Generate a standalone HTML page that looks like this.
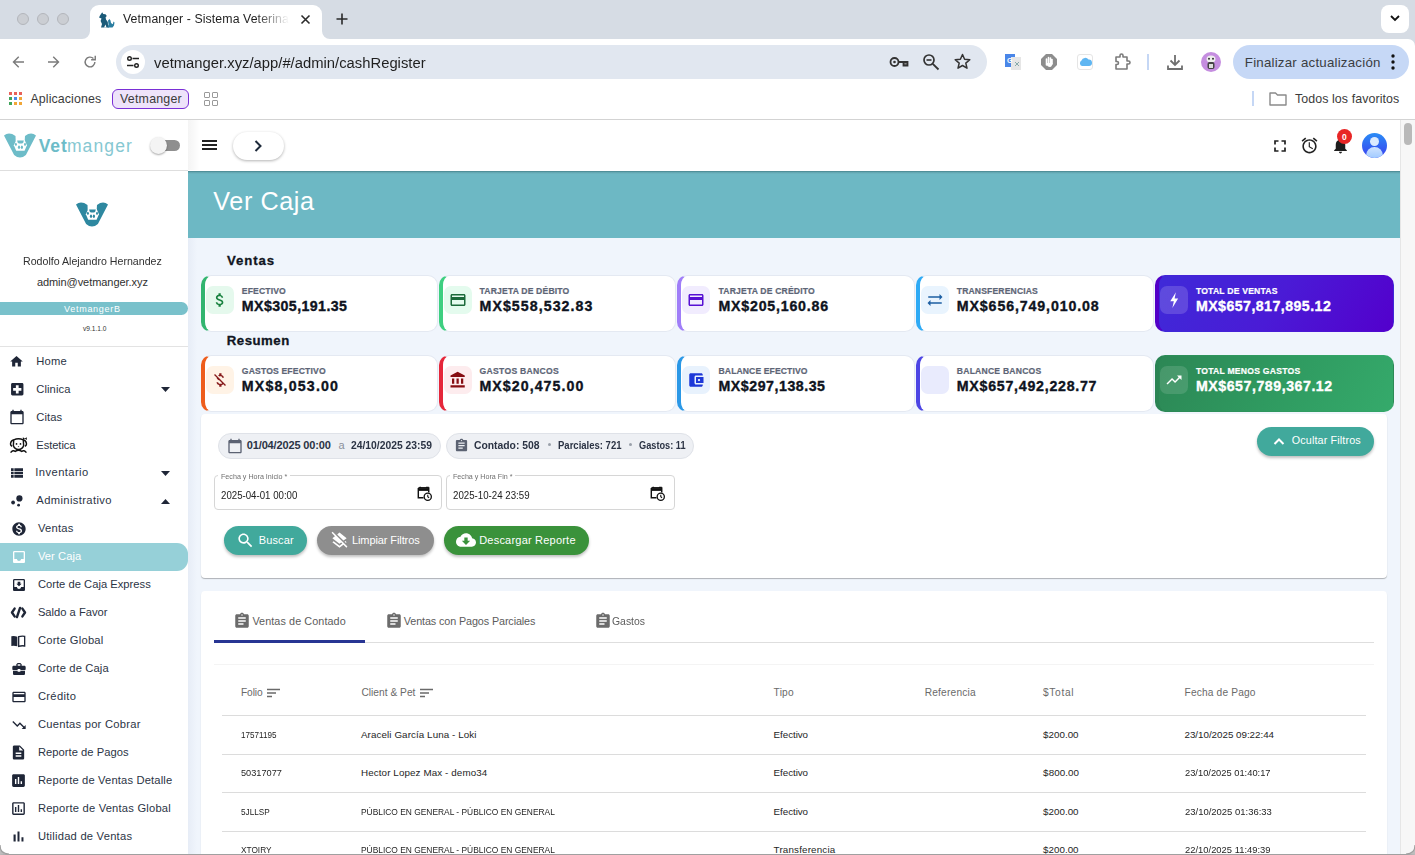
<!DOCTYPE html>
<html><head><meta charset="utf-8"><title>Vetmanger - Ver Caja</title>
<style>
html,body{margin:0;padding:0;width:1415px;height:855px;overflow:hidden;background:#fff;font-family:'Liberation Sans', sans-serif;}
span{line-height:1;white-space:nowrap;}
svg{display:block;overflow:visible}
</style></head><body>
<div style="position:absolute;left:0px;top:0px;width:1415px;height:39px;background:#d6dce4"></div>
<div style="position:absolute;left:17px;top:13px;width:12px;height:12px;border-radius:50%;background:#cbced3;box-sizing:border-box;border:1px solid #b3b6bb"></div>
<div style="position:absolute;left:37px;top:13px;width:12px;height:12px;border-radius:50%;background:#cbced3;box-sizing:border-box;border:1px solid #b3b6bb"></div>
<div style="position:absolute;left:57px;top:13px;width:12px;height:12px;border-radius:50%;background:#cbced3;box-sizing:border-box;border:1px solid #b3b6bb"></div>
<div style="position:absolute;left:90px;top:5px;width:232px;height:34px;background:#fff;border-radius:9px 9px 0 0"></div>
<svg style="position:absolute;left:82px;top:31px" width="8" height="8"><path d="M0 8 A8 8 0 0 0 8 0 L8 8 Z" fill="#fff"/></svg>
<svg style="position:absolute;left:322px;top:31px" width="8" height="8"><path d="M8 8 A8 8 0 0 1 0 0 L0 8 Z" fill="#fff"/></svg>
<svg style="position:absolute;left:98px;top:11px;" width="17" height="17" viewBox="0 0 17 17"><path d="M2 4.5 L4.2 1.2 L5.2 3 L7.5 3.2 L8.8 5 L7.6 6.2 L8 8.5 L9.8 11 L10 14 L11 16.5 L3 16.5 L4 13 L2.6 10 L3.5 7.5 L1 6.5 Z" fill="#1b5a78"/><path d="M10 9.5 L11.5 8 L12.5 9.5 L13 12 L14.8 13.2 L15.5 10.5 L16.5 11.5 L16 14.5 L14.5 16.5 L9.5 16.5 L10.5 13.5 Z" fill="#2a7da0"/><path d="M6 16.5 L7.5 13.5 L8.5 16.5 Z" fill="#fff"/></svg>
<svg style="position:absolute;left:300px;top:14px;" width="11" height="11" viewBox="0 0 11 11"><path d="M1.5 1.5 L9.5 9.5 M9.5 1.5 L1.5 9.5" stroke="#2a2a2a" stroke-width="1.6"/></svg>
<svg style="position:absolute;left:336px;top:13px;" width="12" height="12" viewBox="0 0 12 12"><path d="M6 0.5 V11.5 M0.5 6 H11.5" stroke="#2a2a2a" stroke-width="1.6"/></svg>
<div style="position:absolute;left:1381px;top:5px;width:28px;height:28px;background:#fff;border-radius:8px"></div>
<svg style="position:absolute;left:1390px;top:15px;" width="10" height="7" viewBox="0 0 10 7"><path d="M1 1 L5 5 L9 1" stroke="#111" stroke-width="1.8" fill="none"/></svg>
<div style="position:absolute;left:0px;top:39px;width:1415px;height:80px;background:#fff"></div>
<div style="position:absolute;left:0px;top:119px;width:1415px;height:1px;background:#d3d3d3"></div>
<svg style="position:absolute;left:1408px;top:39px" width="7" height="7" viewBox="0 0 7 7"><path d="M0 0 H7 V7 A7 7 0 0 0 0 0 Z" fill="#d6dce4"/></svg>
<svg style="position:absolute;left:9px;top:53px;" width="18" height="18" viewBox="0 0 24 24"><path d="M13 5 L6 12 L13 19 M6 12 H20" stroke="#7b7b7b" stroke-width="1.9" fill="none"/></svg>
<svg style="position:absolute;left:45px;top:53px;" width="18" height="18" viewBox="0 0 24 24"><path d="M11 5 L18 12 L11 19 M18 12 H4" stroke="#7b7b7b" stroke-width="1.9" fill="none"/></svg>
<svg style="position:absolute;left:81px;top:53px;" width="18" height="18" viewBox="0 0 24 24"><path d="M18.5 12 A6.5 6.5 0 1 1 16.6 7.4" stroke="#7b7b7b" stroke-width="1.9" fill="none"/><path d="M19 3.5 V9 H13.5" stroke="#7b7b7b" stroke-width="1.9" fill="none"/></svg>
<div style="position:absolute;left:116px;top:45px;width:871px;height:34px;background:#e1e7f0;border-radius:17px"></div>
<div style="position:absolute;left:121px;top:50px;width:24px;height:24px;background:#fff;border-radius:50%"></div>
<svg style="position:absolute;left:125px;top:54px;" width="16" height="16" viewBox="0 0 16 16"><circle cx="4.5" cy="4.5" r="1.8" stroke="#222" stroke-width="1.4" fill="none"/><path d="M7.5 4.5 H14" stroke="#222" stroke-width="1.5"/><path d="M2 11.5 H8.5" stroke="#222" stroke-width="1.5"/><circle cx="11.5" cy="11.5" r="1.8" stroke="#222" stroke-width="1.4" fill="none"/></svg>
<svg style="position:absolute;left:889px;top:53px;" width="20" height="18" viewBox="0 0 20 18"><circle cx="5.5" cy="9" r="4" stroke="#333" stroke-width="1.8" fill="none"/><circle cx="5.5" cy="9" r="1.3" fill="#333"/><path d="M9.5 9 H18.5 V12.5 H14.5 V9" stroke="#333" stroke-width="1.8" fill="#888"/></svg>
<svg style="position:absolute;left:922px;top:53px;" width="18" height="18" viewBox="0 0 18 18"><circle cx="7" cy="7" r="5" stroke="#333" stroke-width="1.7" fill="none"/><path d="M4.5 7 H9.5" stroke="#333" stroke-width="1.6"/><path d="M10.8 10.8 L16.5 16.5" stroke="#333" stroke-width="1.8"/></svg>
<svg style="position:absolute;left:954px;top:53px;" width="17" height="17" viewBox="0 0 17 17"><path d="M8.5 1.5 L10.6 6.3 L15.8 6.7 L11.8 10.1 L13 15.2 L8.5 12.5 L4 15.2 L5.2 10.1 L1.2 6.7 L6.4 6.3 Z" stroke="#333" stroke-width="1.5" fill="none" stroke-linejoin="round"/></svg>
<svg style="position:absolute;left:1005px;top:54px;" width="17" height="16" viewBox="0 0 17 16"><rect x="0" y="0" width="10" height="13" fill="#4a86e8"/><rect x="6" y="3" width="10" height="13" fill="#e6e6e6"/><text x="2" y="9" font-size="7" fill="#fff" font-family="Liberation Sans" font-weight="bold">G</text><path d="M10 8 L14 12 M14 8 L10 12" stroke="#8aa" stroke-width="1"/></svg>
<svg style="position:absolute;left:1041px;top:54px;" width="16" height="16" viewBox="0 0 16 16"><path d="M5 0 H11 L16 5 V11 L11 16 H5 L0 11 V5 Z" fill="#8d8d8d"/><path d="M5.5 11 V5 M7.5 10 V3.5 M9.5 10 V4 M11 10 V5.5" stroke="#fff" stroke-width="1.6" stroke-linecap="round"/><path d="M5 9 Q6 13 9 13 Q11 13 11.5 9" fill="#fff"/></svg>
<div style="position:absolute;left:1077px;top:54px;width:16px;height:16px;background:#fff;border:1px solid #e5e5e5;border-radius:3px;box-sizing:border-box"></div>
<svg style="position:absolute;left:1079px;top:57px;" width="12" height="9" viewBox="0 0 12 9"><path d="M3 9 A3 3 0 0 1 2.5 3.5 A4 4 0 0 1 9.5 2.5 A3 3 0 0 1 10 9 Z" fill="#5fb6f2"/></svg>
<svg style="position:absolute;left:1113px;top:53px;" width="18" height="18" viewBox="0 0 18 18"><path d="M3 4 H7 V2.5 A1.5 1.5 0 0 1 10 2.5 V4 H14 V8 H15.5 A1.5 1.5 0 0 1 15.5 11 H14 V16 H3 V11.5 H4 A1.5 1.5 0 0 0 4 8.5 H3 Z" stroke="#7b7b7b" stroke-width="1.6" fill="none" stroke-linejoin="round"/></svg>
<div style="position:absolute;left:1147px;top:54px;width:2px;height:16px;background:#c5d7f5"></div>
<svg style="position:absolute;left:1166px;top:53px;" width="18" height="18" viewBox="0 0 18 18"><path d="M9 2 V12 M4.5 7.5 L9 12 L13.5 7.5" stroke="#6f6f6f" stroke-width="1.8" fill="none"/><path d="M2 12.5 V16 H16 V12.5" stroke="#6f6f6f" stroke-width="1.8" fill="none"/></svg>
<div style="position:absolute;left:1201px;top:52px;width:20px;height:20px;background:#c58ee0;border-radius:50%"></div>
<svg style="position:absolute;left:1204px;top:54px;" width="14" height="16" viewBox="0 0 14 16"><ellipse cx="7" cy="5" rx="4.5" ry="3.5" fill="#eee"/><circle cx="5" cy="4.8" r="1" fill="#333"/><circle cx="9" cy="4.8" r="1" fill="#333"/><rect x="3.5" y="8" width="7" height="7" rx="2" fill="#444"/><rect x="5" y="10" width="4" height="4" fill="#ddd"/></svg>
<div style="position:absolute;left:1233px;top:45px;width:176px;height:34px;background:#c6d8f6;border-radius:17px"></div>
<svg style="position:absolute;left:1390px;top:53px;" width="6" height="18" viewBox="0 0 6 18"><circle cx="3" cy="3" r="1.7" fill="#111"/><circle cx="3" cy="9" r="1.7" fill="#111"/><circle cx="3" cy="15" r="1.7" fill="#111"/></svg>
<div style="position:absolute;left:9px;top:92px;width:3px;height:3px;background:#e8625a"></div>
<div style="position:absolute;left:14px;top:92px;width:3px;height:3px;background:#e8625a"></div>
<div style="position:absolute;left:19px;top:92px;width:3px;height:3px;background:#e8625a"></div>
<div style="position:absolute;left:9px;top:97px;width:3px;height:3px;background:#3fa45b"></div>
<div style="position:absolute;left:14px;top:97px;width:3px;height:3px;background:#4a8bea"></div>
<div style="position:absolute;left:19px;top:97px;width:3px;height:3px;background:#f1a637"></div>
<div style="position:absolute;left:9px;top:102px;width:3px;height:3px;background:#3fa45b"></div>
<div style="position:absolute;left:14px;top:102px;width:3px;height:3px;background:#f1a637"></div>
<div style="position:absolute;left:19px;top:102px;width:3px;height:3px;background:#f1a637"></div>
<div style="position:absolute;left:112px;top:89px;width:77px;height:20px;background:#eee3fa;border:1.5px solid #7a2fd6;border-radius:6px;box-sizing:border-box"></div>
<div style="position:absolute;left:204px;top:92px;width:6px;height:6px;border:1.3px solid #9a9a9a;box-sizing:border-box;border-radius:1px"></div>
<div style="position:absolute;left:212px;top:92px;width:6px;height:6px;border:1.3px solid #9a9a9a;box-sizing:border-box;border-radius:1px"></div>
<div style="position:absolute;left:204px;top:100px;width:6px;height:6px;border:1.3px solid #9a9a9a;box-sizing:border-box;border-radius:1px"></div>
<div style="position:absolute;left:212px;top:100px;width:6px;height:6px;border:1.3px solid #9a9a9a;box-sizing:border-box;border-radius:1px"></div>
<div style="position:absolute;left:1252px;top:91px;width:2px;height:15px;background:#c5d7f5"></div>
<svg style="position:absolute;left:1269px;top:91px;" width="18" height="15" viewBox="0 0 18 15"><path d="M1 2 H6.5 L8.5 4 H17 V14 H1 Z" stroke="#8a8a8a" stroke-width="1.4" fill="none" stroke-linejoin="round"/></svg>
<div style="position:absolute;left:0px;top:120px;width:1415px;height:735px;background:#f0f5fc"></div>
<div style="position:absolute;left:0px;top:120px;width:1400px;height:51px;background:#fff"></div>
<div style="position:absolute;left:0px;top:170px;width:188px;height:1px;background:#dedede"></div>
<div style="position:absolute;left:188px;top:170px;width:1212px;height:1px;background:#fff"></div>
<div style="position:absolute;left:188px;top:120px;width:12px;height:50px;background:linear-gradient(90deg,rgba(0,0,0,.045),rgba(0,0,0,0))"></div>
<svg style="position:absolute;left:4px;top:132.5px;" width="32" height="25" viewBox="0 0 32 25"><path d="M0 2.4 Q5 -1.6 11.5 2.9 L11.7 8 L20.7 8 L21 2.9 Q27 -1.6 32 2.4 L21.9 22 Q16 27 10.1 22 Z" fill="#6dbcc8"/><path d="M9.9 12.3 L12.2 7.1 H20.6 L22.9 12.3 L20.6 17.7 H12.2 Z" fill="#fff"/><path d="M13.1 7.4 H19.8 L19.1 9.9 Q16.5 11.2 13.9 9.9 Z" fill="#6dbcc8"/><ellipse cx="11.9" cy="11.4" rx="1" ry="1.4" fill="#6dbcc8"/><ellipse cx="15" cy="14.3" rx="1.1" ry="1.7" fill="#6dbcc8"/><ellipse cx="17.9" cy="14.3" rx="1.1" ry="1.7" fill="#6dbcc8"/><ellipse cx="21" cy="11.4" rx="1" ry="1.4" fill="#6dbcc8"/></svg>
<div style="position:absolute;left:153px;top:140px;width:27px;height:11px;background:#8f8f8f;border-radius:6px"></div>
<div style="position:absolute;left:150px;top:137px;width:17px;height:17px;background:#f4f4f4;border-radius:50%;box-shadow:0 1px 2px rgba(0,0,0,.35)"></div>
<div style="position:absolute;left:202px;top:140px;width:15px;height:2px;background:#222"></div>
<div style="position:absolute;left:202px;top:144px;width:15px;height:2px;background:#222"></div>
<div style="position:absolute;left:202px;top:148px;width:15px;height:2px;background:#222"></div>
<div style="position:absolute;left:233px;top:132px;width:51px;height:28px;background:#fff;border-radius:14px;box-shadow:0 1px 3px rgba(0,0,0,.3)"></div>
<svg style="position:absolute;left:253px;top:139px;" width="10" height="14" viewBox="0 0 10 14"><path d="M2.5 2 L7.5 7 L2.5 12" stroke="#1e2a3a" stroke-width="2" fill="none"/></svg>
<svg style="position:absolute;left:1273.5px;top:139.5px;" width="12" height="12" viewBox="0 0 12 12"><path d="M1 4.5 V1 H4.5 M7.5 1 H11 V4.5 M11 7.5 V11 H7.5 M4.5 11 H1 V7.5" stroke="#222" stroke-width="1.7" fill="none"/></svg>
<svg style="position:absolute;left:1300px;top:136px;" width="19" height="19" viewBox="0 0 24 24"><path d="M22 5.72l-4.6-3.86-1.29 1.53 4.6 3.86L22 5.72zM7.88 3.39L6.6 1.86 2 5.71l1.29 1.53 4.59-3.85zM12.5 8H11v6l4.75 2.85.75-1.23-4-2.37V8zM12 4c-4.97 0-9 4.03-9 9s4.02 9 9 9c4.97 0 9-4.03 9-9s-4.03-9-9-9zm0 16c-3.87 0-7-3.13-7-7s3.13-7 7-7 7 3.13 7 7-3.13 7-7 7z" fill="#222"/></svg>
<svg style="position:absolute;left:1331px;top:136px;" width="19" height="19" viewBox="0 0 24 24"><path d="M12 22c1.1 0 2-.9 2-2h-4c0 1.1.89 2 2 2zm6-6v-5c0-3.07-1.64-5.64-4.5-6.32V4c0-.83-.67-1.5-1.5-1.5s-1.5.67-1.5 1.5v.68C7.63 5.36 6 7.92 6 11v5l-2 2v1h16v-1l-2-2z" fill="#1e1e1e"/></svg>
<div style="position:absolute;left:1337px;top:129px;width:15px;height:15px;background:#e82626;border-radius:50%"></div>
<div style="position:absolute;left:1362px;top:133px;width:25px;height:25px;border-radius:50%;background:linear-gradient(180deg,#2a8cf5,#3a3ff0);overflow:hidden"><div style="position:absolute;left:8px;top:4px;width:9px;height:9px;border-radius:50%;background:#dbeafe"></div><div style="position:absolute;left:4px;top:14px;width:17px;height:12px;border-radius:9px 9px 3px 3px;background:linear-gradient(180deg,#cfe3ff,#9cc8ff)"></div></div>
<div style="position:absolute;left:1400px;top:120px;width:15px;height:735px;background:#f7f7f7;border-left:1px solid #e6e6e6;box-sizing:border-box"></div>
<div style="position:absolute;left:1404px;top:123px;width:8px;height:22px;background:#b9b9b9;border-radius:4px"></div>
<div style="position:absolute;left:0px;top:171px;width:188px;height:684px;background:#fff"></div>
<svg style="position:absolute;left:76px;top:201.5px;" width="32" height="25" viewBox="0 0 32 25"><path d="M0 2.4 Q5 -1.6 11.5 2.9 L11.7 8 L20.7 8 L21 2.9 Q27 -1.6 32 2.4 L21.9 22 Q16 27 10.1 22 Z" fill="#2e88a0"/><path d="M9.9 12.3 L12.2 7.1 H20.6 L22.9 12.3 L20.6 17.7 H12.2 Z" fill="#fff"/><path d="M13.1 7.4 H19.8 L19.1 9.9 Q16.5 11.2 13.9 9.9 Z" fill="#2e88a0"/><ellipse cx="11.9" cy="11.4" rx="1" ry="1.4" fill="#2e88a0"/><ellipse cx="15" cy="14.3" rx="1.1" ry="1.7" fill="#2e88a0"/><ellipse cx="17.9" cy="14.3" rx="1.1" ry="1.7" fill="#2e88a0"/><ellipse cx="21" cy="11.4" rx="1" ry="1.4" fill="#2e88a0"/></svg>
<div style="position:absolute;left:0px;top:302px;width:188px;height:13px;background:#79c1cb;border-radius:0 7px 7px 0"></div>
<div style="position:absolute;left:188px;top:238px;width:13px;height:617px;background:linear-gradient(90deg,rgba(60,80,140,.05),rgba(60,80,140,0) 70%)"></div>
<div style="position:absolute;left:0px;top:543px;width:188px;height:28px;background:#96d0d8;border-radius:0 11px 11px 0"></div>
<svg style="position:absolute;left:9px;top:353.7px;" width="15" height="15" viewBox="0 0 24 24"><path d="M10 20v-6h4v6h5v-8h3L12 3 2 12h3v8z" fill="#1f2637"/></svg>
<svg style="position:absolute;left:8.5px;top:380.9px;" width="16.5" height="16.5" viewBox="0 0 24 24"><path d="M19 3H5c-1.1 0-1.99.9-1.99 2L3 19c0 1.1.9 2 2 2h14c1.1 0 2-.9 2-2V5c0-1.1-.9-2-2-2zm-1 11h-4v4h-4v-4H6v-4h4V6h4v4h4v4z" fill="#1f2637"/></svg>
<svg style="position:absolute;left:8.5px;top:409.1px;" width="16" height="16" viewBox="0 0 24 24"><path d="M20 3h-1V1h-2v2H7V1H5v2H4c-1.1 0-2 .9-2 2v16c0 1.1.9 2 2 2h16c1.1 0 2-.9 2-2V5c0-1.1-.9-2-2-2zm0 18H4V8h16v13z" fill="#1f2637"/></svg>
<svg style="position:absolute;left:9px;top:435.6px;" width="19" height="19" viewBox="0 0 24 24"><path d="M6 5 Q3 5 2 9 Q1.5 12 4 13 M18 5 Q21 5 22 9 Q22.5 12 20 13" stroke="#111" stroke-width="1.8" fill="none"/><path d="M6 5 Q12 2 18 5 L18.5 12 Q17 17 12 17 Q7 17 5.5 12 Z" fill="none" stroke="#111" stroke-width="1.8"/><circle cx="9.5" cy="10" r="1.1" fill="#111"/><circle cx="14.5" cy="10" r="1.1" fill="#111"/><path d="M11 13 H13 L12 14.2Z" fill="#111"/><path d="M2 21 Q5 17 8 19.5 Q12 16.5 16 19.5 Q19 17 22 21" stroke="#111" stroke-width="1.8" fill="none"/><path d="M17.5 1.5 L20 3 L22.5 1.5 L22.5 5 L20 3.5 L17.5 5 Z" fill="#111"/></svg>
<svg style="position:absolute;left:9px;top:465.0px;" width="16" height="16" viewBox="0 0 24 24"><path d="M3 14h4v-4H3v4zm0 5h4v-4H3v4zM3 9h4V5H3v4zm5 5h13v-4H8v4zm0 5h13v-4H8v4zM8 5v4h13V5H8z" fill="#1f2637"/></svg>
<svg style="position:absolute;left:0;top:0" width="30" height="520"><circle cx="13.1" cy="502.5" r="1.9" fill="#1f2637"/><circle cx="19.4" cy="498.4" r="3.1" fill="#1f2637"/><circle cx="18.6" cy="505.2" r="1.4" fill="#1f2637"/></svg>
<svg style="position:absolute;left:10.5px;top:520.9px;" width="16" height="16" viewBox="0 0 24 24"><path d="M12 2C6.48 2 2 6.48 2 12s4.48 10 10 10 10-4.48 10-10S17.52 2 12 2zm1.41 16.09V20h-2.67v-1.93c-1.71-.36-3.16-1.46-3.27-3.4h1.96c.1 1.05.82 1.87 2.65 1.87 1.96 0 2.4-.98 2.4-1.59 0-.83-.44-1.61-2.67-2.14-2.48-.6-4.180-1.62-4.18-3.67 0-1.72 1.39-2.84 3.11-3.21V4h2.67v1.95c1.86.45 2.79 1.86 2.85 3.39H14.3c-.05-1.11-.64-1.870-2.22-1.87-1.5 0-2.4.68-2.4 1.64 0 .84.65 1.39 2.67 1.91s4.18 1.39 4.18 3.91c-.01 1.83-1.38 2.83-3.12 3.16z" fill="#1f2637"/></svg>
<svg style="position:absolute;left:10.5px;top:548.9px;" width="16" height="16" viewBox="0 0 24 24"><path d="M19 3H4.99c-1.11 0-1.98.89-1.98 2L3 19c0 1.1.88 2 1.99 2H19c1.1 0 2-.9 2-2V5c0-1.11-.9-2-2-2zm0 12h-4c0 1.66-1.35 3-3 3s-3-1.34-3-3H4.99V5H19v10z" fill="#fff"/></svg>
<svg style="position:absolute;left:10.5px;top:576.8px;" width="16" height="16" viewBox="0 0 24 24"><path d="M19 3H4.99c-1.11 0-1.98.9-1.98 2L3 19c0 1.1.88 2 1.99 2H19c1.1 0 2-.9 2-2V5c0-1.1-.9-2-2-2zm0 12h-4c0 1.66-1.35 3-3 3s-3-1.34-3-3H4.99V5H19v10zm-3-5h-2V7h-4v3H8l4 4 4-4z" fill="#1f2637"/></svg>
<svg style="position:absolute;left:9.5px;top:604.2px;" width="17" height="17" viewBox="0 0 24 24"><path d="M6.5 6.5 L2.8 12 L6.5 17.5 M17.5 6.5 L21.2 12 L17.5 17.5 M14.2 5.5 L9.8 18.5" stroke="#1f2637" stroke-width="3.4" fill="none" stroke-linejoin="round" stroke-linecap="round"/></svg>
<svg style="position:absolute;left:10px;top:632.7px;" width="16" height="16" viewBox="0 0 24 24"><path d="M2 5 Q6 4 11 5.5 V20 Q6 18.5 2 19.5 Z" fill="#1f2637"/><path d="M13 5.5 Q18 4 22 5 V19.5 Q18 18.5 13 20 Z" fill="none" stroke="#1f2637" stroke-width="2"/></svg>
<svg style="position:absolute;left:10.5px;top:660.7px;" width="16" height="16" viewBox="0 0 24 24"><path d="M10 16v-1H3.01L3 19c0 1.11.89 2 2 2h14c1.11 0 2-.89 2-2v-4h-7v1h-4zm10-9h-4.01V5l-2-2h-4l-2 2v2H4c-1.1 0-2 .9-2 2v3c0 1.11.89 2 2 2h6v-2h4v2h6c1.1 0 2-.9 2-2V9c0-1.1-.9-2-2-2zm-6 0h-4V5h4v2z" fill="#1f2637"/></svg>
<svg style="position:absolute;left:10.5px;top:688.6px;" width="16" height="16" viewBox="0 0 24 24"><path d="M20 4H4c-1.11 0-1.99.89-1.99 2L2 18c0 1.11.89 2 2 2h16c1.11 0 2-.89 2-2V6c0-1.11-.89-2-2-2zm0 14H4v-6h16v6zm0-10H4V6h16v2z" fill="#1f2637"/></svg>
<svg style="position:absolute;left:10.5px;top:716.5px;" width="16" height="16" viewBox="0 0 24 24"><path d="M16 18l2.29-2.29-4.88-4.88-4 4L2 7.41 3.41 6l6 6 4-4 6.3 6.29L22 12v6z" fill="#1f2637"/></svg>
<svg style="position:absolute;left:10px;top:744.0px;" width="17" height="17" viewBox="0 0 24 24"><path d="M14 2H6c-1.1 0-1.99.9-1.99 2L4 20c0 1.1.89 2 1.99 2H18c1.1 0 2-.9 2-2V8l-6-6zm2 16H8v-2h8v2zm0-4H8v-2h8v2zm-3-5V3.5L18.5 9H13z" fill="#1f2637"/></svg>
<svg style="position:absolute;left:10px;top:772.0px;" width="17" height="17" viewBox="0 0 24 24"><path d="M19 3H5c-1.1 0-2 .9-2 2v14c0 1.1.9 2 2 2h14c1.1 0 2-.9 2-2V5c0-1.1-.9-2-2-2zM9 17H7v-7h2v7zm4 0h-2V7h2v10zm4 0h-2v-4h2v4z" fill="#1f2637"/></svg>
<svg style="position:absolute;left:10px;top:799.9px;" width="17" height="17" viewBox="0 0 24 24"><path d="M9 17H7v-7h2v7zm4 0h-2V7h2v10zm4 0h-2v-4h2v4zm2 2H5V5h14v14.1V19zm0-16H5c-1.1 0-2 .9-2 2v14c0 1.1.9 2 2 2h14c1.1 0 2-.9 2-2V5c0-1.1-.9-2-2-2z" fill="#1f2637"/></svg>
<svg style="position:absolute;left:10px;top:827.9px;" width="17" height="17" viewBox="0 0 24 24"><path d="M5 9.2h3V19H5zM10.6 5h2.8v14h-2.8zm5.6 8H19v6h-2.8z" fill="#1f2637"/></svg>
<svg style="position:absolute;left:161px;top:387.1px;" width="9" height="5" viewBox="0 0 8.5 4.5"><path d="M0 0 L8.5 0 L4.25 4.5 Z" fill="#1f2637"/></svg>
<svg style="position:absolute;left:161px;top:470.9px;" width="9" height="5" viewBox="0 0 8.5 4.5"><path d="M0 0 L8.5 0 L4.25 4.5 Z" fill="#1f2637"/></svg>
<svg style="position:absolute;left:161px;top:498.9px;" width="9" height="5" viewBox="0 0 8.5 4.5"><path d="M0 4.5 L8.5 4.5 L4.25 0 Z" fill="#1f2637"/></svg>
<div style="position:absolute;left:0px;top:346px;width:188px;height:1px;background:#e3e3e3"></div>
<div style="position:absolute;left:188px;top:171px;width:1212px;height:67px;background:#6db8c4"></div>
<div style="position:absolute;left:188px;top:171px;width:1212px;height:1px;background:#4f8f99"></div>
<div style="position:absolute;left:188px;top:172px;width:1212px;height:2px;background:linear-gradient(180deg,rgba(0,0,0,.12),rgba(0,0,0,0))"></div>
<div style="position:absolute;left:201px;top:275px;width:237px;height:57px;background:#fff;border-radius:10px;box-sizing:border-box;border:1px solid #e4e9f2;border-left:4px solid #32b56f;background-clip:border-box"></div>
<div style="position:absolute;left:206px;top:286px;width:28px;height:28px;background:#e5f9ed;border-radius:7px"></div>
<svg style="position:absolute;left:211px;top:291px;" width="18" height="18" viewBox="0 0 24 24"><path d="M11.8 10.9c-2.27-.59-3-1.2-3-2.15 0-1.09 1.01-1.850 2.7-1.85 1.78 0 2.44.85 2.5 2.1h2.21c-.07-1.72-1.12-3.3-3.21-3.81V3h-3v2.16c-1.94.42-3.5 1.68-3.5 3.61 0 2.31 1.91 3.46 4.7 4.13 2.5.6 3 1.48 3 2.41 0 .69-.49 1.79-2.7 1.79-2.06 0-2.87-.92-2.98-2.1h-2.2c.12 2.19 1.76 3.42 3.68 3.83V21h3v-2.15c1.95-.37 3.5-1.5 3.5-3.55 0-2.84-2.43-3.81-4.7-4.4z" fill="#17813e"/></svg>
<div style="position:absolute;left:439px;top:275px;width:237px;height:57px;background:#fff;border-radius:10px;box-sizing:border-box;border:1px solid #e4e9f2;border-left:4px solid #3ecf80;background-clip:border-box"></div>
<div style="position:absolute;left:444px;top:286px;width:28px;height:28px;background:#e4fbee;border-radius:7px"></div>
<svg style="position:absolute;left:449px;top:291px;" width="18" height="18" viewBox="0 0 24 24"><path d="M20 4H4c-1.11 0-1.99.89-1.99 2L2 18c0 1.11.89 2 2 2h16c1.11 0 2-.89 2-2V6c0-1.11-.89-2-2-2zm0 14H4v-6h16v6zm0-10H4V6h16v2z" fill="#1b6a3a"/></svg>
<div style="position:absolute;left:677px;top:275px;width:238px;height:57px;background:#fff;border-radius:10px;box-sizing:border-box;border:1px solid #e4e9f2;border-left:4px solid #a07ef8;background-clip:border-box"></div>
<div style="position:absolute;left:682px;top:286px;width:28px;height:28px;background:#f1ecfe;border-radius:7px"></div>
<svg style="position:absolute;left:687px;top:291px;" width="18" height="18" viewBox="0 0 24 24"><path d="M20 4H4c-1.11 0-1.99.89-1.99 2L2 18c0 1.11.89 2 2 2h16c1.11 0 2-.89 2-2V6c0-1.11-.89-2-2-2zm0 14H4v-6h16v6zm0-10H4V6h16v2z" fill="#5710d3"/></svg>
<div style="position:absolute;left:916px;top:275px;width:238px;height:57px;background:#fff;border-radius:10px;box-sizing:border-box;border:1px solid #e4e9f2;border-left:4px solid #2eaaf5;background-clip:border-box"></div>
<div style="position:absolute;left:921px;top:286px;width:28px;height:28px;background:#e9f4fe;border-radius:7px"></div>
<svg style="position:absolute;left:926px;top:291px;" width="18" height="18" viewBox="0 0 24 24"><path d="M22 8l-4-4v3H3v2h15v3z M2 16l4 4v-3h15v-2H6v-3z" fill="#1d5fa3"/></svg>
<div style="position:absolute;left:1155px;top:275px;width:239px;height:57px;background:linear-gradient(120deg,#3f2ad8 0%,#4a1bd6 50%,#5300cc 100%);border-radius:10px;box-sizing:border-box;border:1px solid transparent;border-left:4px solid #5200c8;background-clip:border-box"></div>
<div style="position:absolute;left:1160px;top:286px;width:28px;height:28px;background:rgba(255,255,255,.16);border-radius:7px"></div>
<svg style="position:absolute;left:1165px;top:291px;" width="18" height="18" viewBox="0 0 24 24"><path d="M14.5 1.5 L7 13.5 H11.8 L9.8 22.5 L17.5 10 H12.8 Z" fill="#fff"/></svg>
<div style="position:absolute;left:201px;top:355px;width:237px;height:57px;background:#fff;border-radius:10px;box-sizing:border-box;border:1px solid #e4e9f2;border-left:4px solid #ee5d1c;background-clip:border-box"></div>
<div style="position:absolute;left:206px;top:366px;width:28px;height:28px;background:#fff3e6;border-radius:7px"></div>
<svg style="position:absolute;left:211px;top:371px;" width="18" height="18" viewBox="0 0 24 24"><path d="M12.5 6.9c1.78 0 2.44.85 2.5 2.1h2.21c-.07-1.72-1.12-3.3-3.21-3.81V3h-3v2.16c-.53.12-1.03.3-1.48.54l1.47 1.47c.41-.17.91-.27 1.51-.27zM5.33 4.06L4.06 5.33 7.5 8.77c0 2.08 1.56 3.21 3.91 3.91l3.51 3.51c-.34.48-1.05.91-2.42.91-2.06 0-2.87-.92-2.980-2.1h-2.2c.12 2.19 1.76 3.42 3.68 3.83V21h3v-2.15c.96-.18 1.82-.55 2.45-1.12l2.22 2.22 1.27-1.27L5.33 4.06z" fill="#86191a"/></svg>
<div style="position:absolute;left:439px;top:355px;width:237px;height:57px;background:#fff;border-radius:10px;box-sizing:border-box;border:1px solid #e4e9f2;border-left:4px solid #e5273a;background-clip:border-box"></div>
<div style="position:absolute;left:444px;top:366px;width:28px;height:28px;background:#fdecee;border-radius:7px"></div>
<svg style="position:absolute;left:449px;top:371px;" width="18" height="18" viewBox="0 0 24 24"><path d="M4 10v7h3v-7H4zm6 0v7h3v-7h-3zM2 22h19v-3H2v3zm14-12v7h3v-7h-3zm-4.5-9L2 6v2h19V6l-9.5-5z" fill="#860d12"/></svg>
<div style="position:absolute;left:677px;top:355px;width:238px;height:57px;background:#fff;border-radius:10px;box-sizing:border-box;border:1px solid #e4e9f2;border-left:4px solid #2b98e6;background-clip:border-box"></div>
<div style="position:absolute;left:682px;top:366px;width:28px;height:28px;background:#e8f2fd;border-radius:7px"></div>
<svg style="position:absolute;left:687px;top:371px;" width="18" height="18" viewBox="0 0 24 24"><path d="M21 18v1c0 1.1-.9 2-2 2H5c-1.11 0-2-.9-2-2V5c0-1.1.89-2 2-2h14c1.1 0 2 .9 2 2v1h-9c-1.11 0-2 .9-2 2v8c0 1.1.89 2 2 2h9zm-9-2h10V8H12v8zm4-2.5c-.83 0-1.5-.67-1.5-1.5s.67-1.5 1.5-1.5 1.5.67 1.5 1.5-.67 1.5-1.5 1.5z" fill="#1d38d8"/></svg>
<div style="position:absolute;left:916px;top:355px;width:238px;height:57px;background:#fff;border-radius:10px;box-sizing:border-box;border:1px solid #e4e9f2;border-left:4px solid #4d45e4;background-clip:border-box"></div>
<div style="position:absolute;left:921px;top:366px;width:28px;height:28px;background:#e9ebfd;border-radius:7px"></div>
<div style="position:absolute;left:1155px;top:355px;width:239px;height:57px;background:linear-gradient(120deg,#2c8755 0%,#2f9a60 50%,#35aa6b 100%);border-radius:10px;box-sizing:border-box;border:1px solid transparent;border-left:4px solid #2a8453;background-clip:border-box"></div>
<div style="position:absolute;left:1160px;top:366px;width:28px;height:28px;background:rgba(255,255,255,.13);border-radius:7px"></div>
<svg style="position:absolute;left:1165px;top:371px;" width="18" height="18" viewBox="0 0 24 24"><path d="M16 6l2.29 2.29-4.88 4.88-4-4L2 16.59 3.41 18l6-6 4 4 6.3-6.29L22 12V6z" fill="#fff"/></svg>
<div style="position:absolute;left:201px;top:414px;width:1186px;height:164px;background:#fff;border-radius:4px;box-shadow:0 1px 1px rgba(0,0,0,.28)"></div>
<div style="position:absolute;left:218px;top:433px;width:223px;height:26px;background:#eef0f4;border:1px solid #dfe2e8;border-radius:13px;box-sizing:border-box"></div>
<svg style="position:absolute;left:227px;top:438px;" width="16" height="16" viewBox="0 0 24 24"><path d="M20 3h-1V1h-2v2H7V1H5v2H4c-1.1 0-2 .9-2 2v16c0 1.1.9 2 2 2h16c1.1 0 2-.9 2-2V5c0-1.1-.9-2-2-2zm0 18H4V8h16v13z" fill="#5b6272"/></svg>
<div style="position:absolute;left:446px;top:433px;width:248px;height:26px;background:#eef0f4;border:1px solid #dfe2e8;border-radius:13px;box-sizing:border-box"></div>
<svg style="position:absolute;left:454px;top:438px;" width="15" height="15" viewBox="0 0 24 24"><path d="M19 3h-4.18C14.4 1.84 13.3 1 12 1c-1.3 0-2.4.84-2.82 2H5c-1.1 0-2 .9-2 2v14c0 1.1.9 2 2 2h14c1.1 0 2-.9 2-2V5c0-1.1-.9-2-2-2zm-7 0c.55 0 1 .45 1 1s-.45 1-1 1-1-.45-1-1 .45-1 1-1zm2 14H7v-2h7v2zm3-4H7v-2h10v2zm0-4H7V7h10v2z" fill="#5b6272"/></svg>
<div style="position:absolute;left:548px;top:443px;width:3px;height:3px;background:#9aa0aa;border-radius:50%"></div>
<div style="position:absolute;left:629px;top:443px;width:3px;height:3px;background:#9aa0aa;border-radius:50%"></div>
<div style="position:absolute;left:1257px;top:427px;width:117px;height:29px;background:#41a99c;border-radius:15px;box-shadow:0 2px 3px rgba(0,0,0,.25)"></div>
<svg style="position:absolute;left:1273px;top:436px;" width="12" height="10" viewBox="0 0 12 10"><path d="M1.5 8 L6 3.5 L10.5 8" stroke="#fff" stroke-width="2" fill="none"/></svg>
<div style="position:absolute;left:214px;top:475px;width:228px;height:35px;border:1px solid #d6d6d6;border-radius:4px;box-sizing:border-box"></div>
<div style="position:absolute;left:218px;top:473px;width:72.2px;height:4px;background:#fff"></div>
<svg style="position:absolute;left:417px;top:486px;" width="15" height="15" viewBox="0 0 23 23"><path d="M3 3 H17 V1 M5 1 V4 M15 1 V4" stroke="#111" stroke-width="2.2" fill="none"/><path d="M2 3 H18 V10 M2 3 V18 H10" stroke="#111" stroke-width="2.2" fill="none"/><path d="M2 6 H18" stroke="#111" stroke-width="3"/><circle cx="16.5" cy="16.5" r="5.5" fill="#fff" stroke="#111" stroke-width="2"/><path d="M16.5 13.5 V16.5 L18.5 18" stroke="#111" stroke-width="1.6" fill="none"/></svg>
<div style="position:absolute;left:446px;top:475px;width:229px;height:35px;border:1px solid #d6d6d6;border-radius:4px;box-sizing:border-box"></div>
<div style="position:absolute;left:450px;top:473px;width:65.4px;height:4px;background:#fff"></div>
<svg style="position:absolute;left:650px;top:486px;" width="15" height="15" viewBox="0 0 23 23"><path d="M3 3 H17 V1 M5 1 V4 M15 1 V4" stroke="#111" stroke-width="2.2" fill="none"/><path d="M2 3 H18 V10 M2 3 V18 H10" stroke="#111" stroke-width="2.2" fill="none"/><path d="M2 6 H18" stroke="#111" stroke-width="3"/><circle cx="16.5" cy="16.5" r="5.5" fill="#fff" stroke="#111" stroke-width="2"/><path d="M16.5 13.5 V16.5 L18.5 18" stroke="#111" stroke-width="1.6" fill="none"/></svg>
<div style="position:absolute;left:224px;top:526px;width:83px;height:29px;background:#41a99c;border-radius:15px;box-shadow:0 2px 3px rgba(0,0,0,.25)"></div>
<svg style="position:absolute;left:236px;top:531px;" width="19" height="19" viewBox="0 0 24 24"><path d="M15.5 14h-.79l-.28-.27C15.41 12.59 16 11.11 16 9.5 16 5.91 13.09 3 9.5 3S3 5.91 3 9.5 5.910 16 9.5 16c1.61 0 3.09-.59 4.23-1.57l.27.28v.79l5 4.99L20.49 19l-4.99-5zm-6 0C7.01 14 5 11.99 5 9.5S7.01 5 9.5 5 14 7.01 14 9.5 11.99 14 9.5 14z" fill="#fff"/></svg>
<div style="position:absolute;left:317px;top:526px;width:117px;height:29px;background:#8e8e8e;border-radius:15px;box-shadow:0 2px 3px rgba(0,0,0,.25)"></div>
<svg style="position:absolute;left:330px;top:531px;" width="19" height="19" viewBox="0 0 24 24"><path d="M19.81 14.99l1.19-.92-1.43-1.43-1.19.92 1.43 1.43zm-.45-4.72L21 9l-9-7-2.91 2.27 7.87 7.88 2.4-1.88zM3.27 1L2 2.27l4.22 4.22L3 9l1.63 1.27L12 16l2.1-1.63 1.43 1.43L12 18.54l-7.37-5.73L3 14.07l9 7 4.95-3.85L20.73 21 22 19.73 3.27 1z" fill="#fff"/></svg>
<div style="position:absolute;left:444px;top:526px;width:145px;height:29px;background:#3a923b;border-radius:15px;box-shadow:0 2px 3px rgba(0,0,0,.25)"></div>
<svg style="position:absolute;left:456px;top:530px;" width="20" height="20" viewBox="0 0 24 24"><path d="M19.35 10.04C18.67 6.59 15.64 4 12 4 9.11 4 6.6 5.64 5.35 8.04 2.34 8.36 0 10.91 0 14c0 3.31 2.69 6 6 6h13c2.76 0 5-2.24 5-5 0-2.64-2.05-4.78-4.65-4.96zM17 13l-5 5-5-5h3V9h4v4h3z" fill="#fff"/></svg>
<div style="position:absolute;left:201px;top:591px;width:1186px;height:280px;background:#fff;border-radius:4px;box-shadow:0 1px 1px rgba(0,0,0,.2)"></div>
<svg style="position:absolute;left:233px;top:612px;" width="18" height="18" viewBox="0 0 24 24"><path d="M19 3h-4.18C14.4 1.84 13.3 1 12 1c-1.3 0-2.4.84-2.82 2H5c-1.1 0-2 .9-2 2v14c0 1.1.9 2 2 2h14c1.1 0 2-.9 2-2V5c0-1.1-.9-2-2-2zm-7 0c.55 0 1 .45 1 1s-.45 1-1 1-1-.45-1-1 .45-1 1-1zm2 14H7v-2h7v2zm3-4H7v-2h10v2zm0-4H7V7h10v2z" fill="#6b6b6b"/></svg>
<svg style="position:absolute;left:385px;top:612px;" width="18" height="18" viewBox="0 0 24 24"><path d="M19 3h-4.18C14.4 1.84 13.3 1 12 1c-1.3 0-2.4.84-2.82 2H5c-1.1 0-2 .9-2 2v14c0 1.1.9 2 2 2h14c1.1 0 2-.9 2-2V5c0-1.1-.9-2-2-2zm-7 0c.55 0 1 .45 1 1s-.45 1-1 1-1-.45-1-1 .45-1 1-1zm2 14H7v-2h7v2zm3-4H7v-2h10v2zm0-4H7V7h10v2z" fill="#6b6b6b"/></svg>
<svg style="position:absolute;left:594px;top:612px;" width="18" height="18" viewBox="0 0 24 24"><path d="M19 3h-4.18C14.4 1.84 13.3 1 12 1c-1.3 0-2.4.84-2.82 2H5c-1.1 0-2 .9-2 2v14c0 1.1.9 2 2 2h14c1.1 0 2-.9 2-2V5c0-1.1-.9-2-2-2zm-7 0c.55 0 1 .45 1 1s-.45 1-1 1-1-.45-1-1 .45-1 1-1zm2 14H7v-2h7v2zm3-4H7v-2h10v2zm0-4H7V7h10v2z" fill="#6b6b6b"/></svg>
<div style="position:absolute;left:214px;top:642px;width:1160px;height:1px;background:#dedede"></div>
<div style="position:absolute;left:214px;top:640px;width:151px;height:2.5px;background:#283593"></div>
<div style="position:absolute;left:214px;top:664px;width:1160px;height:1px;background:#f4f4f4"></div>
<svg style="position:absolute;left:267px;top:688px;" width="13" height="10" viewBox="0 0 13 9"><path d="M0 1 H13 M0 4.5 H9 M0 8 H5" stroke="#6a6a6a" stroke-width="1.5"/></svg>
<svg style="position:absolute;left:420px;top:688px;" width="13" height="10" viewBox="0 0 13 9"><path d="M0 1 H13 M0 4.5 H9 M0 8 H5" stroke="#6a6a6a" stroke-width="1.5"/></svg>
<div style="position:absolute;left:222px;top:715px;width:1144px;height:1px;background:#dcdcdc"></div>
<div style="position:absolute;left:222px;top:754px;width:1144px;height:1px;background:#dcdcdc"></div>
<div style="position:absolute;left:222px;top:792px;width:1144px;height:1px;background:#dcdcdc"></div>
<div style="position:absolute;left:222px;top:831px;width:1144px;height:1px;background:#dcdcdc"></div>
<div style="position:absolute;left:0px;top:853.5px;width:1415px;height:1.5px;background:#a0a0a0"></div>
<svg style="position:absolute;left:0;top:845px" width="10" height="10" viewBox="0 0 10 10"><path d="M0 0 Q0 9 9 9 L0 10 Z" fill="#bdbdbd"/><path d="M0 0 Q0 9 9 9" stroke="#a0a0a0" stroke-width="1.2" fill="none"/></svg>
<svg style="position:absolute;left:1405px;top:845px" width="10" height="10" viewBox="0 0 10 10"><path d="M10 0 Q10 9 1 9 L10 10 Z" fill="#bdbdbd"/><path d="M10 0 Q10 9 1 9" stroke="#a0a0a0" stroke-width="1.2" fill="none"/></svg>
<span id="t0" style="position:absolute;left:123px;top:13px;font-size:12.3px;font-weight:400;color:#1f1f1f;letter-spacing:0.092px;-webkit-mask-image:linear-gradient(90deg,#000 80%,transparent 100%);">Vetmanger - Sistema Veterina</span>
<span id="t1" style="position:absolute;left:153.5px;top:55px;font-size:15.3px;font-weight:400;color:#1f1f1f;letter-spacing:0px;transform:scaleX(0.9679);transform-origin:0 0;">vetmanger.xyz/app/#/admin/cashRegister</span>
<span id="t2" style="position:absolute;left:1244.8px;top:56px;font-size:13.3px;font-weight:400;color:#3a3d42;letter-spacing:0.217px;">Finalizar actualización</span>
<span id="t3" style="position:absolute;left:30.4px;top:93px;font-size:12.4px;font-weight:400;color:#3b3b3b;letter-spacing:0.112px;">Aplicaciones</span>
<span id="t4" style="position:absolute;left:120px;top:93px;font-size:12.4px;font-weight:400;color:#3b3b3b;letter-spacing:0.225px;">Vetmanger</span>
<span id="t5" style="position:absolute;left:1295px;top:93px;font-size:12.4px;font-weight:400;color:#3b3b3b;letter-spacing:0.088px;">Todos los favoritos</span>
<span id="t6" style="position:absolute;left:38.7px;top:138px;font-size:17.5px;font-weight:700;color:#6dbcc8;letter-spacing:0.93px;">Vet</span>
<span id="t7" style="position:absolute;left:66.9px;top:138px;font-size:17.5px;font-weight:400;color:#86c8d2;letter-spacing:1.118px;">manger</span>
<span id="t8" style="position:absolute;left:1342px;top:133px;font-size:8.5px;font-weight:700;color:#fff;letter-spacing:0px;">0</span>
<span id="t9" style="position:absolute;left:22.5px;top:256px;font-size:11px;font-weight:400;color:#303030;letter-spacing:0px;transform:scaleX(0.9658);transform-origin:0 0;">Rodolfo Alejandro Hernandez</span>
<span id="t10" style="position:absolute;left:36.9px;top:277px;font-size:11px;font-weight:400;color:#303030;letter-spacing:-0.058px;">admin@vetmanger.xyz</span>
<span id="t11" style="position:absolute;left:64px;top:305px;font-size:9px;font-weight:400;color:#fff;letter-spacing:0.719px;">VetmangerB</span>
<span id="t12" style="position:absolute;left:83px;top:326px;font-size:6.6px;font-weight:400;color:#333;letter-spacing:0px;">v9.1.1.0</span>
<span id="t13" style="position:absolute;left:36.3px;top:356px;font-size:11.2px;font-weight:400;color:#2b3445;letter-spacing:0.193px;">Home</span>
<span id="t14" style="position:absolute;left:36.3px;top:384px;font-size:11.2px;font-weight:400;color:#2b3445;letter-spacing:0.091px;">Clinica</span>
<span id="t15" style="position:absolute;left:36.3px;top:412px;font-size:11.2px;font-weight:400;color:#2b3445;letter-spacing:0.076px;">Citas</span>
<span id="t16" style="position:absolute;left:36.3px;top:440px;font-size:11.2px;font-weight:400;color:#2b3445;letter-spacing:-0.082px;">Estetica</span>
<span id="t17" style="position:absolute;left:35.3px;top:467px;font-size:11.2px;font-weight:400;color:#2b3445;letter-spacing:0.421px;">Inventario</span>
<span id="t18" style="position:absolute;left:36.3px;top:495px;font-size:11.2px;font-weight:400;color:#2b3445;letter-spacing:0.382px;">Administrativo</span>
<span id="t19" style="position:absolute;left:37.9px;top:523px;font-size:11.2px;font-weight:400;color:#2b3445;letter-spacing:0.236px;">Ventas</span>
<span id="t20" style="position:absolute;left:37.9px;top:551px;font-size:11.2px;font-weight:400;color:#fff;letter-spacing:0.059px;">Ver Caja</span>
<span id="t21" style="position:absolute;left:37.9px;top:579px;font-size:11.2px;font-weight:400;color:#2b3445;letter-spacing:0.017px;">Corte de Caja Express</span>
<span id="t22" style="position:absolute;left:37.9px;top:607px;font-size:11.2px;font-weight:400;color:#2b3445;letter-spacing:-0.002px;">Saldo a Favor</span>
<span id="t23" style="position:absolute;left:37.9px;top:635px;font-size:11.2px;font-weight:400;color:#2b3445;letter-spacing:0.235px;">Corte Global</span>
<span id="t24" style="position:absolute;left:37.9px;top:663px;font-size:11.2px;font-weight:400;color:#2b3445;letter-spacing:0.15px;">Corte de Caja</span>
<span id="t25" style="position:absolute;left:37.9px;top:691px;font-size:11.2px;font-weight:400;color:#2b3445;letter-spacing:0.326px;">Crédito</span>
<span id="t26" style="position:absolute;left:37.9px;top:719px;font-size:11.2px;font-weight:400;color:#2b3445;letter-spacing:0.251px;">Cuentas por Cobrar</span>
<span id="t27" style="position:absolute;left:37.9px;top:747px;font-size:11.2px;font-weight:400;color:#2b3445;letter-spacing:0.034px;">Reporte de Pagos</span>
<span id="t28" style="position:absolute;left:37.9px;top:775px;font-size:11.2px;font-weight:400;color:#2b3445;letter-spacing:0.155px;">Reporte de Ventas Detalle</span>
<span id="t29" style="position:absolute;left:37.9px;top:803px;font-size:11.2px;font-weight:400;color:#2b3445;letter-spacing:0.207px;">Reporte de Ventas Global</span>
<span id="t30" style="position:absolute;left:37.9px;top:831px;font-size:11.2px;font-weight:400;color:#2b3445;letter-spacing:0.23px;">Utilidad de Ventas</span>
<span id="t31" style="position:absolute;left:213.3px;top:189px;font-size:25.2px;font-weight:400;color:#fff;letter-spacing:0.586px;">Ver Caja</span>
<span id="t32" style="position:absolute;left:227px;top:254px;font-size:13.2px;font-weight:700;color:#101522;letter-spacing:0.923px;-webkit-text-stroke:0.3px #101522;">Ventas</span>
<span id="t33" style="position:absolute;left:226.8px;top:334px;font-size:13.2px;font-weight:700;color:#101522;letter-spacing:0.515px;-webkit-text-stroke:0.3px #101522;">Resumen</span>
<span id="t34" style="position:absolute;left:241.8px;top:287px;font-size:8.6px;font-weight:700;color:#5d6576;letter-spacing:0.145px;-webkit-text-stroke:0.2px #5d6576;">EFECTIVO</span>
<span id="t35" style="position:absolute;left:241.8px;top:299px;font-size:14.2px;font-weight:700;color:#0e1320;letter-spacing:0.418px;-webkit-text-stroke:0.35px #0e1320;">MX$305,191.35</span>
<span id="t36" style="position:absolute;left:479.5px;top:287px;font-size:8.6px;font-weight:700;color:#5d6576;letter-spacing:0.169px;-webkit-text-stroke:0.2px #5d6576;">TARJETA DE DÉBITO</span>
<span id="t37" style="position:absolute;left:479.5px;top:299px;font-size:14.2px;font-weight:700;color:#0e1320;letter-spacing:1.059px;-webkit-text-stroke:0.35px #0e1320;">MX$558,532.83</span>
<span id="t38" style="position:absolute;left:718.5px;top:287px;font-size:8.6px;font-weight:700;color:#5d6576;letter-spacing:0.177px;-webkit-text-stroke:0.2px #5d6576;">TARJETA DE CRÉDITO</span>
<span id="t39" style="position:absolute;left:718.5px;top:299px;font-size:14.2px;font-weight:700;color:#0e1320;letter-spacing:0.784px;-webkit-text-stroke:0.35px #0e1320;">MX$205,160.86</span>
<span id="t40" style="position:absolute;left:956.8px;top:287px;font-size:8.6px;font-weight:700;color:#5d6576;letter-spacing:0.137px;-webkit-text-stroke:0.2px #5d6576;">TRANSFERENCIAS</span>
<span id="t41" style="position:absolute;left:956.8px;top:299px;font-size:14.2px;font-weight:700;color:#0e1320;letter-spacing:0.881px;-webkit-text-stroke:0.35px #0e1320;">MX$656,749,010.08</span>
<span id="t42" style="position:absolute;left:1195.9px;top:287px;font-size:8.6px;font-weight:700;color:#fff;letter-spacing:0.211px;-webkit-text-stroke:0.2px #fff;">TOTAL DE VENTAS</span>
<span id="t43" style="position:absolute;left:1195.9px;top:299px;font-size:14.2px;font-weight:700;color:#fff;letter-spacing:0.444px;-webkit-text-stroke:0.35px #fff;">MX$657,817,895.12</span>
<span id="t44" style="position:absolute;left:241.8px;top:367px;font-size:8.6px;font-weight:700;color:#5d6576;letter-spacing:0.164px;-webkit-text-stroke:0.2px #5d6576;">GASTOS EFECTIVO</span>
<span id="t45" style="position:absolute;left:241.8px;top:379px;font-size:14.2px;font-weight:700;color:#0e1320;letter-spacing:1.179px;-webkit-text-stroke:0.35px #0e1320;">MX$8,053.00</span>
<span id="t46" style="position:absolute;left:479.5px;top:367px;font-size:8.6px;font-weight:700;color:#5d6576;letter-spacing:0.298px;-webkit-text-stroke:0.2px #5d6576;">GASTOS BANCOS</span>
<span id="t47" style="position:absolute;left:479.5px;top:379px;font-size:14.2px;font-weight:700;color:#0e1320;letter-spacing:1.046px;-webkit-text-stroke:0.35px #0e1320;">MX$20,475.00</span>
<span id="t48" style="position:absolute;left:718.5px;top:367px;font-size:8.6px;font-weight:700;color:#5d6576;letter-spacing:0.107px;-webkit-text-stroke:0.2px #5d6576;">BALANCE EFECTIVO</span>
<span id="t49" style="position:absolute;left:718.5px;top:379px;font-size:14.2px;font-weight:700;color:#0e1320;letter-spacing:0.526px;-webkit-text-stroke:0.35px #0e1320;">MX$297,138.35</span>
<span id="t50" style="position:absolute;left:956.8px;top:367px;font-size:8.6px;font-weight:700;color:#5d6576;letter-spacing:0.215px;-webkit-text-stroke:0.2px #5d6576;">BALANCE BANCOS</span>
<span id="t51" style="position:absolute;left:956.8px;top:379px;font-size:14.2px;font-weight:700;color:#0e1320;letter-spacing:0.744px;-webkit-text-stroke:0.35px #0e1320;">MX$657,492,228.77</span>
<span id="t52" style="position:absolute;left:1195.9px;top:367px;font-size:8.6px;font-weight:700;color:#fff;letter-spacing:0.245px;-webkit-text-stroke:0.2px #fff;">TOTAL MENOS GASTOS</span>
<span id="t53" style="position:absolute;left:1195.9px;top:379px;font-size:14.2px;font-weight:700;color:#fff;letter-spacing:0.531px;-webkit-text-stroke:0.35px #fff;">MX$657,789,367.12</span>
<span id="t54" style="position:absolute;left:246.8px;top:440px;font-size:11px;font-weight:700;color:#2b3344;letter-spacing:-0.148px;">01/04/2025 00:00</span>
<span id="t55" style="position:absolute;left:338.4px;top:440px;font-size:11px;font-weight:400;color:#8b909b;letter-spacing:0px;">a</span>
<span id="t56" style="position:absolute;left:350.9px;top:440px;font-size:11px;font-weight:700;color:#2b3344;letter-spacing:0px;transform:scaleX(0.9393);transform-origin:0 0;">24/10/2025 23:59</span>
<span id="t57" style="position:absolute;left:474.4px;top:440px;font-size:11px;font-weight:700;color:#2b3344;letter-spacing:0px;transform:scaleX(0.9402);transform-origin:0 0;">Contado: 508</span>
<span id="t58" style="position:absolute;left:558.2px;top:440px;font-size:11px;font-weight:700;color:#2b3344;letter-spacing:0px;transform:scaleX(0.8653);transform-origin:0 0;">Parciales: 721</span>
<span id="t59" style="position:absolute;left:639px;top:440px;font-size:11px;font-weight:700;color:#2b3344;letter-spacing:0px;transform:scaleX(0.8357);transform-origin:0 0;">Gastos: 11</span>
<span id="t60" style="position:absolute;left:1291.8px;top:435px;font-size:10.8px;font-weight:400;color:#fff;letter-spacing:0.122px;">Ocultar Filtros</span>
<span id="t61" style="position:absolute;left:220.7px;top:473px;font-size:8px;font-weight:400;color:#6f6f6f;letter-spacing:0px;transform:scaleX(0.8929);transform-origin:0 0;">Fecha y Hora Inicio *</span>
<span id="t62" style="position:absolute;left:220.7px;top:491px;font-size:10.2px;font-weight:400;color:#222;letter-spacing:0px;transform:scaleX(0.9496);transform-origin:0 0;">2025-04-01 00:00</span>
<span id="t63" style="position:absolute;left:452.7px;top:473px;font-size:8px;font-weight:400;color:#6f6f6f;letter-spacing:0px;transform:scaleX(0.8922);transform-origin:0 0;">Fecha y Hora Fin *</span>
<span id="t64" style="position:absolute;left:452.7px;top:491px;font-size:10.2px;font-weight:400;color:#222;letter-spacing:0px;transform:scaleX(0.9521);transform-origin:0 0;">2025-10-24 23:59</span>
<span id="t65" style="position:absolute;left:258.8px;top:535px;font-size:11px;font-weight:400;color:#fff;letter-spacing:0.106px;">Buscar</span>
<span id="t66" style="position:absolute;left:352px;top:535px;font-size:11px;font-weight:400;color:#fff;letter-spacing:-0.098px;">Limpiar Filtros</span>
<span id="t67" style="position:absolute;left:479.2px;top:535px;font-size:11px;font-weight:400;color:#fff;letter-spacing:0.212px;">Descargar Reporte</span>
<span id="t68" style="position:absolute;left:252.4px;top:616px;font-size:10.8px;font-weight:400;color:#5c5c5c;letter-spacing:0.091px;">Ventas de Contado</span>
<span id="t69" style="position:absolute;left:403.8px;top:616px;font-size:10.8px;font-weight:400;color:#5c5c5c;letter-spacing:-0.114px;">Ventas con Pagos Parciales</span>
<span id="t70" style="position:absolute;left:612.4px;top:616px;font-size:10.8px;font-weight:400;color:#5c5c5c;letter-spacing:0px;transform:scaleX(0.9654);transform-origin:0 0;">Gastos</span>
<span id="t71" style="position:absolute;left:241px;top:688px;font-size:10.2px;font-weight:400;color:#6a6a6a;letter-spacing:-0.104px;">Folio</span>
<span id="t72" style="position:absolute;left:361.4px;top:688px;font-size:10.2px;font-weight:400;color:#6a6a6a;letter-spacing:0.022px;">Client & Pet</span>
<span id="t73" style="position:absolute;left:773.6px;top:688px;font-size:10.2px;font-weight:400;color:#6a6a6a;letter-spacing:0.209px;">Tipo</span>
<span id="t74" style="position:absolute;left:924.7px;top:688px;font-size:10.2px;font-weight:400;color:#6a6a6a;letter-spacing:0.189px;">Referencia</span>
<span id="t75" style="position:absolute;left:1043px;top:688px;font-size:10.2px;font-weight:400;color:#6a6a6a;letter-spacing:0.676px;">$Total</span>
<span id="t76" style="position:absolute;left:1184.5px;top:688px;font-size:10.2px;font-weight:400;color:#6a6a6a;letter-spacing:0.156px;">Fecha de Pago</span>
<span id="t77" style="position:absolute;left:240.7px;top:730px;font-size:9.8px;font-weight:400;color:#252525;letter-spacing:0px;transform:scaleX(0.8269);transform-origin:0 0;">17571195</span>
<span id="t78" style="position:absolute;left:361px;top:730px;font-size:9.8px;font-weight:400;color:#252525;letter-spacing:0.089px;">Araceli García Luna - Loki</span>
<span id="t79" style="position:absolute;left:773.6px;top:730px;font-size:9.8px;font-weight:400;color:#252525;letter-spacing:-0.057px;">Efectivo</span>
<span id="t80" style="position:absolute;left:1043.1px;top:730px;font-size:9.8px;font-weight:400;color:#252525;letter-spacing:0.006px;">$200.00</span>
<span id="t81" style="position:absolute;left:1184.5px;top:730px;font-size:9.8px;font-weight:400;color:#252525;letter-spacing:-0.019px;">23/10/2025 09:22:44</span>
<span id="t82" style="position:absolute;left:240.7px;top:768px;font-size:9.8px;font-weight:400;color:#252525;letter-spacing:0px;transform:scaleX(0.9388);transform-origin:0 0;">50317077</span>
<span id="t83" style="position:absolute;left:361px;top:768px;font-size:9.8px;font-weight:400;color:#252525;letter-spacing:0.11px;">Hector Lopez Max - demo34</span>
<span id="t84" style="position:absolute;left:773.6px;top:768px;font-size:9.8px;font-weight:400;color:#252525;letter-spacing:-0.057px;">Efectivo</span>
<span id="t85" style="position:absolute;left:1043.1px;top:768px;font-size:9.8px;font-weight:400;color:#252525;letter-spacing:0.089px;">$800.00</span>
<span id="t86" style="position:absolute;left:1184.5px;top:768px;font-size:9.8px;font-weight:400;color:#252525;letter-spacing:0px;transform:scaleX(0.9515);transform-origin:0 0;">23/10/2025 01:40:17</span>
<span id="t87" style="position:absolute;left:240.7px;top:807px;font-size:9.8px;font-weight:400;color:#252525;letter-spacing:0px;transform:scaleX(0.8367);transform-origin:0 0;">5JLLSP</span>
<span id="t88" style="position:absolute;left:361px;top:807px;font-size:9.8px;font-weight:400;color:#252525;letter-spacing:0px;transform:scaleX(0.8572);transform-origin:0 0;">PÚBLICO EN GENERAL - PÚBLICO EN GENERAL</span>
<span id="t89" style="position:absolute;left:773.6px;top:807px;font-size:9.8px;font-weight:400;color:#252525;letter-spacing:-0.057px;">Efectivo</span>
<span id="t90" style="position:absolute;left:1043.1px;top:807px;font-size:9.8px;font-weight:400;color:#252525;letter-spacing:0.006px;">$200.00</span>
<span id="t91" style="position:absolute;left:1184.5px;top:807px;font-size:9.8px;font-weight:400;color:#252525;letter-spacing:0px;transform:scaleX(0.9664);transform-origin:0 0;">23/10/2025 01:36:33</span>
<span id="t92" style="position:absolute;left:240.7px;top:845px;font-size:9.8px;font-weight:400;color:#252525;letter-spacing:0px;transform:scaleX(0.8447);transform-origin:0 0;">XTOIRY</span>
<span id="t93" style="position:absolute;left:361px;top:845px;font-size:9.8px;font-weight:400;color:#252525;letter-spacing:0px;transform:scaleX(0.8572);transform-origin:0 0;">PÚBLICO EN GENERAL - PÚBLICO EN GENERAL</span>
<span id="t94" style="position:absolute;left:773.6px;top:845px;font-size:9.8px;font-weight:400;color:#252525;letter-spacing:0.176px;">Transferencia</span>
<span id="t95" style="position:absolute;left:1043.1px;top:845px;font-size:9.8px;font-weight:400;color:#252525;letter-spacing:0.006px;">$200.00</span>
<span id="t96" style="position:absolute;left:1184.5px;top:845px;font-size:9.8px;font-weight:400;color:#252525;letter-spacing:0px;transform:scaleX(0.9593);transform-origin:0 0;">22/10/2025 11:49:39</span>
</body></html>
